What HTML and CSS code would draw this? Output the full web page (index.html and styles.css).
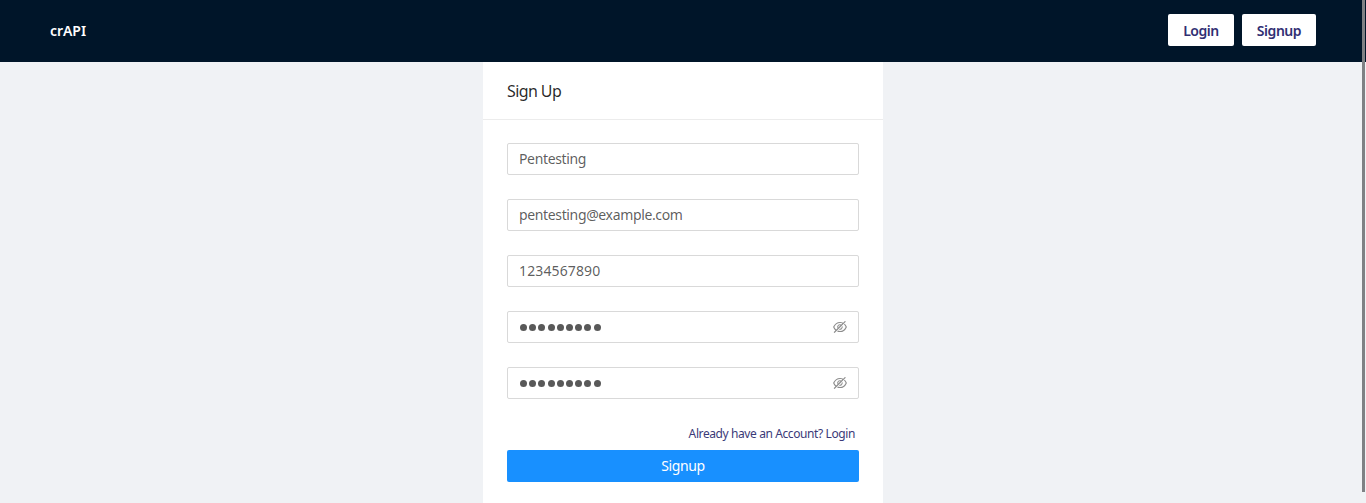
FILE: index.html
```
<!DOCTYPE html>
<html lang="en">
<head>
<meta charset="utf-8">
<title>crAPI</title>
<link rel="stylesheet" href="styles.css">
</head>
<body>
<svg class="defs" width="0" height="0" aria-hidden="true">
  <symbol id="eye-off" viewBox="64 64 896 896">
    <path d="M942.2 486.2Q889.47 375.11 816.7 305l-50.88 50.88C807.31 395.53 843.45 447.4 874.7 512 791.5 684.2 673.4 766 512 766q-72.67 0-133.87-22.38L323 798.75Q408 838 512 838q288.3 0 430.2-300.3a60.29 60.29 0 000-51.5zm-63.57-320.64L836 122.88a8 8 0 00-11.32 0L715.31 232.2Q624.86 186 512 186q-288.3 0-430.2 300.3a60.3 60.3 0 000 51.5q56.69 119.4 136.5 191.41L112.48 835a8 8 0 000 11.31L155.17 889a8 8 0 0011.31 0l712.15-712.12a8 8 0 000-11.32zM149.3 512C232.6 339.8 350.7 258 512 258c54.54 0 104.13 9.36 149.12 28.39l-70.3 70.3a176 176 0 00-238.13 238.13l-83.42 83.42C223.1 637.49 183.3 582.28 149.3 512zm246.7 0a112.11 112.11 0 01146.2-106.69L401.31 546.2A112 112 0 01396 512z"/>
    <path d="M508 624c-3.46 0-6.87-.16-10.25-.47l-52.82 52.82a176.09 176.09 0 00227.42-227.42l-52.82 52.82c.31 3.38.47 6.79.47 10.25a111.94 111.94 0 01-112 112z"/>
  </symbol>
</svg>
<header class="navbar">
  <div class="brand">crAPI</div>
  <nav class="nav-actions">
    <button class="nav-button">Login</button>
    <button class="nav-button">Signup</button>
  </nav>
</header>
<main class="content">
  <section class="card">
    <h1 class="card-title">Sign Up</h1>
    <div class="card-body">
      <div class="field">Pentesting</div>
      <div class="field">pentesting@example.com</div>
      <div class="field field-number">1234567890</div>
      <div class="field">
        <span class="mask"><i></i><i></i><i></i><i></i><i></i><i></i><i></i><i></i><i></i></span>
        <svg class="eye"><use href="#eye-off"/></svg>
      </div>
      <div class="field">
        <span class="mask"><i></i><i></i><i></i><i></i><i></i><i></i><i></i><i></i><i></i></span>
        <svg class="eye"><use href="#eye-off"/></svg>
      </div>
      <a class="login-link">Already have an Account? Login</a>
      <button class="submit">Signup</button>
    </div>
  </section>
</main>
<div class="scroll-thumb"></div>
</body>
</html>
```
FILE: styles.css
```
* {
  box-sizing: border-box;
}

body {
  margin: 0;
  height: 503px;
  overflow: hidden;
  display: flex;
  flex-direction: column;
  background: #f0f2f5;
  font-family: "Noto Sans", sans-serif;
  font-size: 14px;
  line-height: 22px;
  color: rgba(0, 0, 0, 0.65);
}

.defs {
  position: absolute;
}

.navbar {
  flex: none;
  height: 62px;
  padding: 0 50px;
  display: flex;
  align-items: center;
  justify-content: space-between;
  background: #001529;
}

.brand {
  color: #fff;
  font-weight: 600;
  letter-spacing: -0.05px;
}

.nav-actions {
  display: flex;
  gap: 8px;
  margin-top: -2px;
}

.nav-button {
  width: 66px;
  height: 32px;
  padding: 0;
  border: 0;
  border-radius: 2px;
  background: #fff;
  color: #312f73;
  font: 600 14px/33px "Noto Sans", sans-serif;
  letter-spacing: -0.45px;
}

.nav-button:last-child {
  width: 74px;
}

.content {
  flex: 1;
  min-height: 0;
  display: flex;
  justify-content: center;
}

.card {
  width: 400px;
  background: #fff;
}

.card-title {
  height: 58px;
  margin: 0;
  padding: 0 24px;
  border-bottom: 1px solid #ececec;
  color: rgba(0, 0, 0, 0.85);
  font-size: 16px;
  font-weight: 400;
  letter-spacing: -0.6px;
  line-height: 58px;
}

.card-body {
  padding: 23px 24px 0;
  display: flex;
  flex-direction: column;
}

.field {
  height: 32px;
  margin-bottom: 24px;
  padding: 0 11px;
  display: flex;
  align-items: center;
  justify-content: space-between;
  border: 1px solid #d9d9d9;
  border-radius: 2px;
  letter-spacing: -0.36px;
}

.field-number {
  letter-spacing: 0.13px;
}

.mask {
  display: flex;
  gap: 2.2px;
  padding-left: 1px;
}

.mask i {
  width: 7px;
  height: 7px;
  border-radius: 50%;
  background: #595959;
}

.eye {
  width: 14px;
  height: 14px;
  fill: rgba(0, 0, 0, 0.45);
}

.login-link {
  align-self: flex-end;
  height: 27px;
  padding-right: 4px;
  color: #3b3a78;
  font-size: 12px;
  letter-spacing: -0.4px;
  line-height: 22px;
}

.submit {
  height: 32px;
  padding: 0;
  border: 0;
  border-radius: 2px;
  background: #1890ff;
  color: #fff;
  font: 400 14px/32px "Noto Sans", sans-serif;
  letter-spacing: -0.4px;
}

.scroll-thumb {
  position: absolute;
  top: 0;
  right: 1px;
  width: 3px;
  height: 492px;
  background: #7f8184;
}
```
